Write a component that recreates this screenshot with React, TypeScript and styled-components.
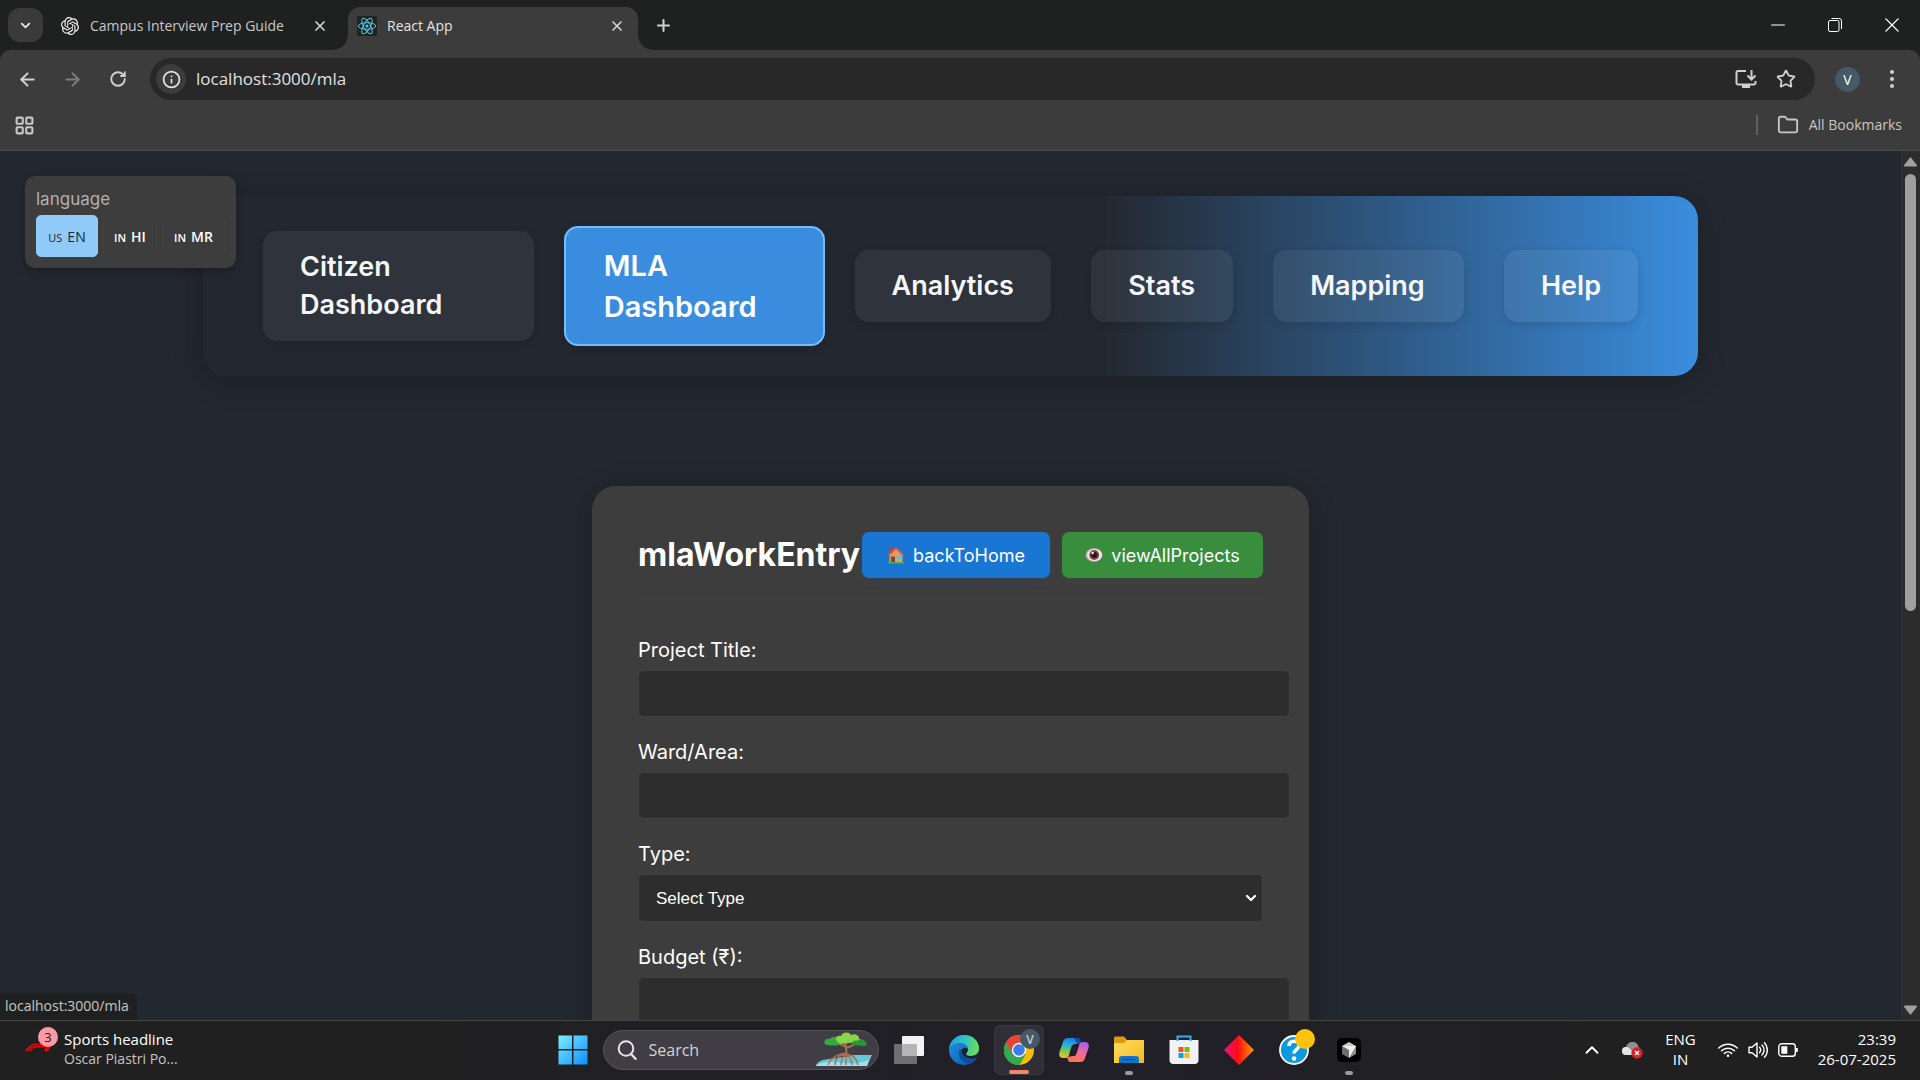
import React from "react";
import styled, { createGlobalStyle, css } from "styled-components";
import {
  ArrowLeft,
  ArrowRight,
  ChevronDown,
  ChevronUp,
  Folder,
  Info,
  LayoutGrid,
  Minus,
  Plus,
  RotateCw,
  Star,
  X,
} from "lucide-react";
import { SiOpenai } from "react-icons/si";

const systemFont = `"Open Sans", "Noto Sans", sans-serif`;
const appFont = `Inter, "Noto Sans", sans-serif`;

const color = {
  strip: "#1f2120",
  chrome: "#3c3c3c",
  omnibox: "#282828",
  page: "#23272f",
  panel: "#3d3d3d",
  field: "#2d2d2d",
  blue: "#3a8dde",
};

const GlobalStyle = createGlobalStyle`
  *, *::before, *::after { box-sizing: border-box; }
  body { margin: 0; background: ${color.page}; font-family: ${systemFont}; }
  button, input, select { font: inherit; color: inherit; margin: 0; }
  button { border: 0; padding: 0; background: none; }
  h1, p { margin: 0; }
  a { color: inherit; text-decoration: none; }
  svg { display: block; flex: none; }
`;

const Screen = styled.div`
  display: flex;
  flex-direction: column;
  height: 100vh;
  overflow: hidden;
`;

/* ---------- browser window ---------- */

const TabStrip = styled.div`
  display: flex;
  align-items: center;
  height: 50px;
  flex: none;
  padding-left: 8px;
  background: ${color.strip};
  color: #e3e3e3;
`;

const TabSearch = styled.button`
  display: grid;
  place-items: center;
  width: 35px;
  height: 34px;
  border-radius: 12px;
  background: #3a3a3a;
`;

const Tab = styled.div<{ $active?: boolean }>`
  position: relative;
  display: flex;
  align-items: center;
  gap: 10px;
  width: ${(p) => (p.$active ? 290 : 305)}px;
  height: 43px;
  margin-top: 7px;
  padding: 0 ${(p) => (p.$active ? 11 : 18)}px 6px ${(p) => (p.$active ? 9 : 17)}px;
  color: ${(p) => (p.$active ? "#e3e3e3" : "#c7c7c7")};
  ${(p) =>
    p.$active &&
    css`
      border-radius: 12px 12px 0 0;
      background: ${color.chrome};
      &::before,
      &::after {
        content: "";
        position: absolute;
        bottom: 0;
        width: 14px;
        height: 14px;
      }
      &::before {
        right: 100%;
        background: radial-gradient(circle at 0 0, transparent 13px, ${color.chrome} 14px);
      }
      &::after {
        left: 100%;
        background: radial-gradient(circle at 100% 0, transparent 13px, ${color.chrome} 14px);
      }
    `}
`;

const TabTitle = styled.span`
  flex: 1;
  font-size: 14px;
  line-height: 20px;
  white-space: nowrap;
`;

const Favicon = styled.span<{ $dark?: boolean }>`
  display: grid;
  place-items: center;
  width: 20px;
  height: 20px;
  border-radius: 2px;
  background: ${(p) => (p.$dark ? "#222222" : "transparent")};
`;

const IconButton = styled.button<{ $width?: number; $dim?: boolean }>`
  display: grid;
  place-items: center;
  width: ${(p) => p.$width ?? 20}px;
  height: 32px;
  color: ${(p) => (p.$dim ? "#7c7c7c" : "#d0d0d0")};
`;

const WindowButtons = styled.div`
  display: flex;
  margin-left: auto;
`;

const WindowButton = styled(IconButton)`
  width: 57px;
  color: #ffffff;
`;

const Toolbar = styled.div`
  display: flex;
  align-items: center;
  height: 50px;
  padding: 8px 8px 0 5px;
  border-radius: 10px 10px 0 0;
  background: ${color.chrome};
  color: #d0d0d0;
`;

const ToolbarFrame = styled.div`
  flex: none;
  background: ${color.strip};
`;

const Omnibox = styled.div`
  display: flex;
  align-items: center;
  flex: 1;
  height: 42px;
  margin: 0 20px 0 10px;
  padding: 0 9px 0 6px;
  border-radius: 21px;
  background: ${color.omnibox};
`;

const SiteInfo = styled.button`
  display: grid;
  place-items: center;
  width: 30px;
  height: 30px;
  border-radius: 50%;
  background: ${color.chrome};
  color: #e3e3e3;
`;

const Address = styled.input`
  flex: 1;
  min-width: 0;
  padding: 0 10px;
  border: 0;
  outline: 0;
  background: transparent;
  color: #e0e0e0;
  font-size: 17px;
  line-height: 24px;
`;

const Avatar = styled.button`
  display: grid;
  place-items: center;
  width: 25px;
  height: 25px;
  border-radius: 50%;
  background: #455a64;
  color: #ffffff;
  font-size: 14px;
  margin-right: 12px;
`;

const BookmarkBar = styled.div`
  display: flex;
  align-items: center;
  justify-content: space-between;
  flex: none;
  height: 51px;
  padding: 0 18px 0 14px;
  border-bottom: 1px solid #4a4a4a;
  background: ${color.chrome};
  color: #c7c7c7;
`;

const AllBookmarks = styled.button`
  display: flex;
  align-items: center;
  gap: 10px;
  height: 20px;
  padding-left: 19px;
  border-left: 2px solid #5e5e5e;
  font-size: 14px;
  line-height: 20px;
`;

/* ---------- page viewport ---------- */

const Viewport = styled.div`
  position: relative;
  display: flex;
  flex: 1;
  min-height: 0;
  background: ${color.page};
`;

const Page = styled.main`
  position: relative;
  flex: 1;
  overflow: hidden;
  font-family: ${appFont};
  color: #ffffff;
`;

const Scrollbar = styled.div`
  display: flex;
  flex-direction: column;
  align-items: center;
  justify-content: space-between;
  width: 19px;
  padding: 6px 0 5px;
  background: #2c2c2c;
`;

const ScrollTrack = styled.div`
  flex: 1;
  width: 11px;
  padding: 7px 0;
`;

const ScrollThumb = styled.div`
  height: 53%;
  border-radius: 6px;
  background: #9f9f9f;
`;

const StatusBubble = styled.div`
  position: absolute;
  left: 0;
  bottom: 0;
  padding: 2px 8px 3px 5px;
  border-top-right-radius: 6px;
  background: ${color.strip};
  color: #c7c7c7;
  font-size: 14px;
  line-height: 22px;
`;

const LanguagePanel = styled.section`
  position: absolute;
  z-index: 1;
  top: 25px;
  left: 25px;
  padding: 11px;
  border-radius: 10px;
  background: ${color.panel};
  box-shadow: 0 3px 10px rgba(0, 0, 0, 0.25);
`;

const LanguageLabel = styled.p`
  color: #b0b0b0;
  font-size: 17px;
  line-height: 24px;
  margin-bottom: 4px;
`;

const LanguageRow = styled.div`
  display: grid;
  grid-template-columns: 62px 54px 63px;
  gap: 5px;
`;

const LanguageButton = styled.button<{ $active?: boolean }>`
  display: flex;
  align-items: center;
  justify-content: center;
  gap: 5px;
  height: 42px;
  border: 1px solid ${(p) => (p.$active ? "#90caf9" : "#404040")};
  border-radius: 5px;
  background: ${(p) => (p.$active ? "#90caf9" : "transparent")};
  color: ${(p) => (p.$active ? "#23272f" : "#ffffff")};
  font-family: ${systemFont};
  font-size: 14px;
  font-weight: ${(p) => (p.$active ? 400 : 600)};
`;

const Region = styled.span`
  padding-top: 2px;
  font-size: 11px;
`;

const Nav = styled.nav`
  display: grid;
  grid-template-columns: 271fr 241fr 197fr 142fr 191fr 133fr;
  align-items: center;
  gap: 40px;
  max-width: 1495px;
  margin: 45px auto 0;
  padding: 30px 60px;
  border-radius: 24px;
  background: linear-gradient(90deg, ${color.page} 60%, ${color.blue} 100%);
  box-shadow: 0 5px 30px rgba(0, 0, 0, 0.22);
`;

const NavLink = styled.a<{ $active?: boolean }>`
  padding: 17px 37px;
  border-radius: 14px;
  background: rgba(255, 255, 255, 0.06);
  box-shadow: 0 3px 10px rgba(0, 0, 0, 0.12);
  color: #f5f7fa;
  font-size: 27px;
  font-weight: 600;
  line-height: 38px;
  ${(p) =>
    p.$active &&
    css`
      margin: 0 -10px;
      padding: 17px 38px;
      border: 2px solid #74bdfb;
      background: ${color.blue};
      color: #ffffff;
      font-size: 29px;
      line-height: 41px;
    `}
`;

const Card = styled.section`
  max-width: 717px;
  margin: 110px auto 0;
  padding: 46px;
  border-radius: 24px;
  background: ${color.panel};
  box-shadow: 0 5px 30px rgba(0, 0, 0, 0.2);
`;

const CardHeader = styled.header`
  display: flex;
  align-items: center;
  justify-content: space-between;
  padding-bottom: 19px;
  margin-bottom: 37px;
  border-bottom: 1px solid #404040;
`;

const CardTitle = styled.h1`
  font-size: 32px;
  font-weight: 700;
  line-height: 46px;
  white-space: nowrap;
`;

const CardActions = styled.div`
  display: grid;
  grid-template-columns: 188px 201px;
  gap: 12px;
`;

const ActionButton = styled.button<{ $tone: string }>`
  display: flex;
  align-items: center;
  justify-content: center;
  gap: 8px;
  height: 46px;
  border-radius: 7px;
  background: ${(p) => p.$tone};
  box-shadow: 0 3px 10px ${(p) => p.$tone}1c;
  font-size: 18px;
`;

const Form = styled.form`
  display: grid;
  gap: 20px;
`;

const Field = styled.div`
  display: grid;
  gap: 5px;
`;

const FieldLabel = styled.label`
  font-size: 20px;
  line-height: 30px;
`;

const fieldBox = css`
  border: 1px solid #414141;
  border-radius: 5px;
  background: ${color.field};
  color: #ffffff;
  font-family: "Liberation Sans", Arial, sans-serif;
  font-size: 17px;
`;

const TextInput = styled.input`
  ${fieldBox}
  width: calc(100% + 27px);
  height: 47px;
  padding: 0 14px;
`;

const SelectWrap = styled.div`
  display: grid;
  align-items: center;
  > * {
    grid-area: 1 / 1;
  }
  > svg {
    justify-self: end;
    margin-right: 4px;
    pointer-events: none;
  }
`;

const SelectInput = styled.select`
  ${fieldBox}
  appearance: none;
  width: 100%;
  height: 48px;
  padding: 0 17px;
`;

/* ---------- taskbar ---------- */

const Taskbar = styled.footer`
  display: grid;
  grid-template-columns: 1fr auto 1fr;
  align-items: center;
  flex: none;
  height: 60px;
  padding: 0 24px 2px 25px;
  border-top: 1px solid #444444;
  background: linear-gradient(90deg, #202020 20%, #211f28 55%, #202020 85%);
  color: #ffffff;
  font-size: 15px;
  line-height: 20px;
`;

const NewsWidget = styled.button`
  display: flex;
  align-items: center;
  gap: 4px;
  justify-self: start;
  text-align: left;
`;

const NewsText = styled.span`
  padding-bottom: 2px;
`;

const Muted = styled.span`
  display: block;
  color: #c4c4c4;
  font-size: 14px;
`;

const Pinned = styled.div`
  display: flex;
  align-items: center;
  gap: 5px;
`;

const AppSlot = styled.button<{ $focused?: boolean; $running?: boolean }>`
  position: relative;
  display: grid;
  place-items: center;
  width: 50px;
  height: 50px;
  border-radius: 6px;
  ${(p) =>
    p.$focused &&
    css`
      border: 1px solid #3a3842;
      background: #302e37;
    `}
  ${(p) =>
    (p.$focused || p.$running) &&
    css`
      &::after {
        content: "";
        position: absolute;
        bottom: 0;
        width: ${p.$focused ? 20 : 8}px;
        height: 4px;
        border-radius: 2px;
        background: ${p.$focused ? "#f58468" : "#9a9a9a"};
      }
    `}
`;

/* Badged icons keep the app mark centred and let the badge hang past its corner. */
const BadgeShift = styled.span`
  display: block;
  padding: 0 0 6px 6px;
`;

const SearchPill = styled.label`
  display: flex;
  align-items: center;
  width: 276px;
  height: 40px;
  padding: 0 5px 0 13px;
  border: 1px solid #57555c;
  border-radius: 20px;
  background: #403e44;
`;

const SearchInput = styled.input`
  flex: 1;
  min-width: 0;
  padding: 0 12px;
  border: 0;
  outline: 0;
  background: transparent;
  font-size: 16px;
  &::placeholder {
    color: #d2d2d4;
    opacity: 1;
  }
`;

const Tray = styled.div`
  display: flex;
  align-items: center;
  justify-self: end;
`;

const TrayGroup = styled.div<{ $gap: number; $right: number }>`
  display: flex;
  align-items: center;
  gap: ${(p) => p.$gap}px;
  margin-right: ${(p) => p.$right}px;
`;

const TrayText = styled.div<{ $align: string; $right?: number }>`
  margin-right: ${(p) => p.$right ?? 0}px;
  padding-bottom: 2px;
  text-align: ${(p) => p.$align};
`;

/* ---------- drawings ---------- */

const ReactMark = () => (
  <svg width="20" height="20" viewBox="-12 -12 24 24" fill="none" stroke="#58c4dc" strokeWidth="1.2">
    <circle r="1.8" fill="#58c4dc" stroke="none" />
    <ellipse rx="10.5" ry="4" />
    <ellipse rx="10.5" ry="4" transform="rotate(60)" />
    <ellipse rx="10.5" ry="4" transform="rotate(120)" />
  </svg>
);

const InstallIcon = () => (
  <svg width="22" height="20" viewBox="0 0 22 20" fill="none" stroke="currentColor" strokeWidth="2">
    <path d="M11 2H3a1.5 1.5 0 0 0-1.5 1.5V14A1.5 1.5 0 0 0 3 15.5h16a1.5 1.5 0 0 0 1.5-1.5v-2" />
    <path d="M16.5 1v9M12.5 6.5l4 4 4-4" />
    <path d="M7 17.5h8" strokeWidth="3" />
  </svg>
);

const KebabIcon = () => (
  <svg width="6" height="20" viewBox="0 0 6 20" fill="currentColor">
    <circle cx="3" cy="3" r="2" />
    <circle cx="3" cy="10" r="2" />
    <circle cx="3" cy="17" r="2" />
  </svg>
);

const RestoreIcon = () => (
  <svg width="14" height="14" viewBox="0 0 14 14" fill="none" stroke="currentColor">
    <rect x=".5" y="2.5" width="10.5" height="11" rx="1.5" />
    <path d="M3.500.5h7.500a2.500 2.500 0 0 1 2.500 2.500v8" />
  </svg>
);

const CloseIcon = () => (
  <svg width="14" height="14" viewBox="0 0 14 14" fill="none" stroke="currentColor" strokeWidth="1.2">
    <path d="m.5.5 13 13m0-13-13 13" />
  </svg>
);

const ScrollArrow = ({ down }: { down?: boolean }) => (
  <svg width="13" height="10" viewBox="0 0 13 10" fill="#9f9f9f">
    <path
      d={
        down
          ? "M1 .5h11a1 1 0 0 1 .8 1.600l-5.500 7a1 1 0 0 1-1.600 0l-5.500-7A1 1 0 0 1 1 .5z"
          : "M1 9.500h11a1 1 0 0 0 .8-1.600l-5.500-7a1 1 0 0 0-1.600 0l-5.500 7A1 1 0 0 0 1 9.500z"
      }
    />
  </svg>
);

const HouseIcon = () => (
  <svg width="18" height="18" viewBox="0 0 18 18">
    <path d="M3 1.500h3v5H3z" fill="#a5523c" />
    <path d="M2.500 8 9 2l6.500 6v9h-13z" fill="#d9a066" />
    <path d="M9 .8 17.500 9l-1.200 1.300L9 3.500l-7.300 6.800L.5 9z" fill="#e0553d" />
    <path d="M4 10.500h4V17H4z" fill="#7a4a32" />
    <path d="M10 9.500h4v4h-4z" fill="#5cc3f0" />
    <path d="M1 16h16v1.500H1z" fill="#4caf50" />
  </svg>
);

const EyeIcon = () => (
  <svg width="18" height="16" viewBox="0 0 18 16">
    <ellipse cx="9" cy="8" rx="8.5" ry="7" fill="#b8a2ab" />
    <ellipse cx="9.5" cy="8" rx="7.5" ry="6" fill="#f1edf0" />
    <circle cx="9.2" cy="8" r="5" fill="#7b4a45" />
    <circle cx="9.2" cy="8" r="3" fill="#2a1416" />
    <circle cx="7.7" cy="6" r="1.2" fill="#ffffff" />
  </svg>
);

const SportsIcon = () => (
  <svg width="35" height="50" viewBox="0 0 35 50">
    <path d="M0 26c4-6 7-7.500 12-7.500h15L23.500 26h-5l2-3.500H12c-3 0-4.500 1-6.500 3.500z" fill="#e10600" />
    <path d="M3 26c4-5 6-5.700 10-5.700h12" fill="none" stroke="#202020" strokeWidth=".8" />
    <circle cx="23" cy="12" r="10" fill="#ff99a4" />
    <text x="23" y="17" textAnchor="middle" fontSize="13" fontFamily="Open Sans" fill="#1a1a1a">
      3
    </text>
  </svg>
);

const StartIcon = () => (
  <svg width="30" height="30" viewBox="0 0 30 30">
    <defs>
      <linearGradient id="start" gradientUnits="userSpaceOnUse" x1="0" y1="0" x2="30" y2="30">
        <stop offset="0" stopColor="#7df0ff" />
        <stop offset="1" stopColor="#0a8bff" />
      </linearGradient>
    </defs>
    <path d="M.5.5H14V14H.5zM15.500.5h14V14h-14zM.5 15.500H14v14H.5zM15.500 15.500h14v14h-14z" fill="url(#start)" />
  </svg>
);

const SearchIcon = () => (
  <svg width="20" height="20" viewBox="0 0 20 20" fill="none" stroke="#e6e6e8" strokeWidth="2">
    <circle cx="9" cy="8.5" r="7.3" />
    <path d="m14 14 4.500 4.800" strokeLinecap="round" strokeWidth="2.4" />
  </svg>
);

const MangroveArt = () => (
  <svg width="58" height="36" viewBox="0 0 58 36">
    <path d="M8 28c12-2 28-3.500 31-5h18l-5 11H1c1-3 3-5 7-6z" fill="#6cc6d9" />
    <path d="M1 33c10-4 20-3 30-2s14 0 23-3l-2 6H1z" fill="#9fe0ea" />
    <g fill="none" stroke="#a9714b" strokeWidth="1.4">
      <path d="M31 9c-2 6 2 9 0 15M31 15c-3-2-7-3-11-5M31 16c4-1 8-3 11-5" strokeWidth="2" />
      <path d="M31 21c-9 1-15 4-18 12M31 22c-7 1-11 5-11 11M31 22c-4 3-5 6-5 11M31 22v11M31 22c4 3 6 6 6 11M31 22c7 1 11 4 12 11" />
    </g>
    <path d="M10 12c-2-3 1-6 5-5 2-3 6-3 8 0 3 0 5 3 3 5-2 2-14 2-16 0z" fill="#35a83f" />
    <path d="M21 8c-1-4 3-5 5-4 1-4 8-5 10-1 4-2 9 1 8 4 3 0 4 3 2 4-4 2-8-1-12 0-5 1-11 2-13-3z" fill="#8bd34b" />
    <path d="M37 13c-1-3 2-5 5-4 3-3 9-1 9 2 2 2 0 3-2 3z" fill="#27963b" />
  </svg>
);

const TaskViewIcon = () => (
  <svg width="30" height="30" viewBox="0 0 30 30">
    <rect x="8" y="1" width="22" height="20" rx="1" fill="#f2f2f2" />
    <rect x="0" y="9" width="23" height="20" rx="1" fill="#8a8a8a" opacity=".75" />
    <rect x="8" y="9" width="15" height="12" fill="#b5b5b5" />
  </svg>
);

const EdgeIcon = () => (
  <svg width="30" height="30" viewBox="0 0 30 30">
    <defs>
      <linearGradient id="edgeTop" x1="0" y1=".3" x2="1" y2=".5">
        <stop offset="0" stopColor="#1f9de0" />
        <stop offset=".5" stopColor="#2fc3c5" />
        <stop offset="1" stopColor="#6ce04f" />
      </linearGradient>
      <linearGradient id="edgeSide" x1="0" y1="0" x2="1" y2="1">
        <stop offset="0" stopColor="#2196e3" />
        <stop offset="1" stopColor="#0b54a8" />
      </linearGradient>
    </defs>
    <circle cx="15" cy="15" r="15" fill="url(#edgeSide)" />
    <path d="M0 14C1 5 8 0 15 0c9 0 15 6 15 13 0 5-4 8-8 8-3 0-5-1-5-2s2-2 2-5c0-4-4-6-8-6C6 8 2 10 0 14z" fill="url(#edgeTop)" />
    <path d="M11 14c-3 5 0 13 9 15 4-1 7-4 8.500-7-5 3-14 1-15.500-5z" fill="#0d4f9e" />
    <path d="M12.500 15a4 4 0 0 1 6.500-1c0 3-2 4-2 5 0 1.500 3 2.300 5 2 3 0 6-1.500 8-4l-1 5c-7 4-16.500 0-16.500-7z" fill="#211f28" />
  </svg>
);

const ChromeIcon = () => (
  <svg width="36" height="36" viewBox="0 0 36 36">
    <circle cx="15" cy="21" r="15" fill="#fbbc05" />
    <path d="M15 21 2 13.500A15 15 0 0 0 15.500 36l6.500-11z" fill="#34a853" />
    <path d="M2 13.500A15 15 0 0 1 28 13.500H15v7.500l-6.500 3.800z" fill="#ea4335" />
    <circle cx="15" cy="21" r="7.2" fill="#ffffff" />
    <circle cx="15" cy="21" r="5.8" fill="#3b7ded" />
    <circle cx="26" cy="10" r="10" fill="#455a64" />
    <text x="26" y="14.5" textAnchor="middle" fontSize="12" fontFamily="Open Sans" fontWeight="600" fill="#c6ced2">
      V
    </text>
  </svg>
);

const CopilotIcon = () => (
  <svg width="30" height="28" viewBox="0 0 30 28">
    <defs>
      <linearGradient id="copilotLeft" x1=".4" y1="0" x2=".2" y2="1">
        <stop offset="0" stopColor="#1c7fe8" />
        <stop offset=".35" stopColor="#22b4d8" />
        <stop offset=".65" stopColor="#7fc851" />
        <stop offset="1" stopColor="#f3c120" />
      </linearGradient>
      <linearGradient id="copilotRight" x1=".8" y1="0" x2=".4" y2="1">
        <stop offset="0" stopColor="#a45cf0" />
        <stop offset=".5" stopColor="#ec6aa0" />
        <stop offset="1" stopColor="#f9774a" />
      </linearGradient>
    </defs>
    <path d="M9 2h9c3 0 3 2 4 5l-6 1c-2 0-3 1-4 4l-2 7c-.5 2-2 3-4 3H4c-3 0-4.500-2-3.500-6L4 6c1-3 2-4 5-4z" fill="url(#copilotLeft)" />
    <path d="M21 26h-9c-3 0-3-2-4-5l6-1c2 0 3-1 4-4l2-7c.5-2 2-3 4-3h2c3 0 4.500 2 3.500 6L26 22c-1 3-2 4-5 4z" fill="url(#copilotRight)" />
    <path d="M16 8h4l-4 12h-4z" fill="#211f28" />
    <path d="M14 2h4c3 0 3 2 4 5h-3c-2 0-3-5-5-5z" fill="#174aa5" />
  </svg>
);

const ExplorerIcon = () => (
  <svg width="30" height="28" viewBox="0 0 30 28">
    <defs>
      <linearGradient id="folder" x1="0" y1="0" x2="1" y2="1">
        <stop offset="0" stopColor="#ffdc62" />
        <stop offset="1" stopColor="#f8b81e" />
      </linearGradient>
    </defs>
    <path d="M0 2a1.500 1.500 0 0 1 1.500-1.500H10l3 3.500h16v8H0z" fill="#dc9a0c" />
    <path d="M0 7h10l3-3h17v23H0z" fill="url(#folder)" />
    <path d="M5 27v-4a3 3 0 0 1 3-3h14a3 3 0 0 1 3 3v4z" fill="#0f75cf" />
    <path d="M9 23.500h12" stroke="#08498c" strokeWidth="1.2" />
  </svg>
);

const StoreIcon = () => (
  <svg width="30" height="30" viewBox="0 0 30 30">
    <path d="M.5 5h29v20a4 4 0 0 1-4 4h-21a4 4 0 0 1-4-4z" fill="#f1f1f1" />
    <path d="M8.500 6V1.500h13V6" fill="none" stroke="#2fb4ee" strokeWidth="2" />
    <path d="M9.500 12h5v5h-5z" fill="#f25022" />
    <path d="M15.500 12h5v5h-5z" fill="#7fba00" />
    <path d="M9.500 18h5v5h-5z" fill="#00a4ef" />
    <path d="M15.500 18h5v5h-5z" fill="#ffb900" />
  </svg>
);

const DiamondIcon = () => (
  <svg width="30" height="30" viewBox="0 0 30 30">
    <defs>
      <linearGradient id="diamond">
        <stop offset="0" stopColor="#e4178a" />
        <stop offset=".45" stopColor="#ff0a14" />
        <stop offset="1" stopColor="#ff9b00" />
      </linearGradient>
    </defs>
    <path d="M15 0 30 15 15 30 0 15z" fill="url(#diamond)" />
  </svg>
);

const HelpIcon = () => (
  <svg width="36" height="36" viewBox="0 0 36 36">
    <circle cx="15" cy="21" r="14" fill="#0a9bdc" stroke="#ffffff" strokeWidth="1.8" />
    <path d="M10 17c0-3 2-4.700 5-4.700s5 1.700 5 4.200c0 4-5 3.700-5 8" fill="none" stroke="#ffffff" strokeWidth="3.6" />
    <circle cx="15" cy="29.5" r="2.3" fill="#ffffff" />
    <circle cx="26" cy="10" r="10" fill="#ffc20e" />
  </svg>
);

const CursorIcon = () => (
  <svg width="24" height="24" viewBox="0 0 24 24">
    <rect width="24" height="24" rx="5" fill="#000000" />
    <path d="m12 4 7 4-7 4-7-4z" fill="#c9c9c9" />
    <path d="M5 8l7 4v8l-7-4z" fill="#6e6e6e" />
    <path d="M19 8v8l-7 4v-8z" fill="#8f8f8f" />
    <path d="M5 8h14l-7 12v-8z" fill="#ededed" />
  </svg>
);

const CloudIcon = () => (
  <svg width="21" height="18" viewBox="0 0 21 18">
    <path d="M4 14a4 4 0 0 1 0-8c1-3 3-5 7-5 3 0 5 2 5.500 5C19 6.500 20 14 15 14z" fill="#8f8f8f" />
    <path d="M4 14a4 4 0 0 1 0-8c3 0 5 2 8 8z" fill="#e4e4e4" />
    <circle cx="15" cy="12" r="5.7" fill="#d8202c" />
    <path d="m13 10 4 4m0-4-4 4" stroke="#ffffff" strokeWidth="1.4" />
  </svg>
);

const WifiIcon = () => (
  <svg width="20" height="16" viewBox="0 0 20 16" fill="none" stroke="#ffffff" strokeWidth="1.5">
    <path d="M.8 6a13 13 0 0 1 18.400 0M3.600 8.800a9 9 0 0 1 12.800 0M6.400 11.400a5.200 5.200 0 0 1 7.200 0" strokeLinecap="round" />
    <circle cx="10" cy="13.8" r="1.3" fill="#ffffff" stroke="none" />
  </svg>
);

const SpeakerIcon = () => (
  <svg width="20" height="18" viewBox="0 0 20 18" fill="none" stroke="#ffffff" strokeWidth="1.4">
    <path d="M1 6.300h3L9 2v14l-5-4.300H1z" strokeLinejoin="round" />
    <path d="M11.500 6.300a4 4 0 0 1 0 5.400M14 4a7 7 0 0 1 0 10M16.500 1.800a10.500 10.500 0 0 1 0 14.400" strokeLinecap="round" />
  </svg>
);

const BatteryIcon = () => (
  <svg width="20" height="14" viewBox="0 0 20 14" fill="none" stroke="#ffffff" strokeWidth="1.4">
    <rect x=".8" y=".8" width="16.5" height="12.4" rx="2.8" />
    <path d="M3.300 3.200h6v7.600h-6z" fill="#ffffff" stroke="none" />
    <path d="M18.800 5v4" strokeWidth="2" />
  </svg>
);

/* ---------- data ---------- */

const navItems = ["Citizen Dashboard", "MLA Dashboard", "Analytics", "Stats", "Mapping", "Help"];

const languages = [
  { region: "US", code: "EN" },
  { region: "IN", code: "HI" },
  { region: "IN", code: "MR" },
];

const apps = [
  { name: "Task view", icon: <TaskViewIcon /> },
  { name: "Edge", icon: <EdgeIcon /> },
  { name: "Chrome", icon: <ChromeIcon />, focused: true, badged: true },
  { name: "Copilot", icon: <CopilotIcon /> },
  { name: "File Explorer", icon: <ExplorerIcon />, running: true },
  { name: "Store", icon: <StoreIcon /> },
  { name: "Studio", icon: <DiamondIcon /> },
  { name: "Get Help", icon: <HelpIcon />, badged: true },
  { name: "Cursor", icon: <CursorIcon />, running: true },
];

function TextField({ id, label }: { id: string; label: string }) {
  return (
    <Field>
      <FieldLabel htmlFor={id}>{label}</FieldLabel>
      <TextInput id={id} type="text" />
    </Field>
  );
}

function Browser() {
  return (
    <>
      <TabStrip>
        <TabSearch aria-label="Search tabs">
          <ChevronDown size={15} strokeWidth={3} />
        </TabSearch>
        <Tab>
          <Favicon>
            <SiOpenai size={18} color="#f0f0f0" />
          </Favicon>
          <TabTitle>Campus Interview Prep Guide</TabTitle>
          <IconButton aria-label="Close tab">
            <X size={16} strokeWidth={2.6} />
          </IconButton>
        </Tab>
        <Tab $active>
          <Favicon $dark>
            <ReactMark />
          </Favicon>
          <TabTitle>React App</TabTitle>
          <IconButton aria-label="Close tab">
            <X size={16} strokeWidth={2.6} />
          </IconButton>
        </Tab>
        <IconButton $width={50} aria-label="New tab">
          <Plus size={19} strokeWidth={2.6} />
        </IconButton>
        <WindowButtons>
          <WindowButton aria-label="Minimize">
            <Minus size={22} strokeWidth={1.3} />
          </WindowButton>
          <WindowButton aria-label="Restore">
            <RestoreIcon />
          </WindowButton>
          <WindowButton aria-label="Close">
            <CloseIcon />
          </WindowButton>
        </WindowButtons>
      </TabStrip>
      <ToolbarFrame>
        <Toolbar>
          <IconButton $width={45} aria-label="Back">
            <ArrowLeft size={21} strokeWidth={2.3} />
          </IconButton>
          <IconButton $width={45} $dim aria-label="Forward">
            <ArrowRight size={21} strokeWidth={2.3} />
          </IconButton>
          <IconButton $width={45} aria-label="Reload">
            <RotateCw size={18} strokeWidth={2.5} />
          </IconButton>
          <Omnibox>
            <SiteInfo aria-label="Site information">
              <Info size={19} strokeWidth={2.2} />
            </SiteInfo>
            <Address aria-label="Address" defaultValue="localhost:3000/mla" />
            <IconButton $width={40} aria-label="Install app">
              <InstallIcon />
            </IconButton>
            <IconButton $width={40} aria-label="Bookmark">
              <Star size={20} strokeWidth={2.2} />
            </IconButton>
          </Omnibox>
          <Avatar aria-label="Profile">V</Avatar>
          <IconButton $width={40} aria-label="Menu">
            <KebabIcon />
          </IconButton>
        </Toolbar>
      </ToolbarFrame>
      <BookmarkBar>
        <LayoutGrid size={21} strokeWidth={2.4} />
        <AllBookmarks>
          <Folder size={22} strokeWidth={2} />
          All Bookmarks
        </AllBookmarks>
      </BookmarkBar>
    </>
  );
}

function Dashboard() {
  return (
    <Viewport>
      <Page>
        <LanguagePanel>
          <LanguageLabel>language</LanguageLabel>
          <LanguageRow>
            {languages.map((l) => (
              <LanguageButton key={l.code} $active={l.code === "EN"}>
                <Region>{l.region}</Region>
                {l.code}
              </LanguageButton>
            ))}
          </LanguageRow>
        </LanguagePanel>
        <Nav>
          {navItems.map((item) => (
            <NavLink key={item} href="#" $active={item === "MLA Dashboard"}>
              {item}
            </NavLink>
          ))}
        </Nav>
        <Card>
          <CardHeader>
            <CardTitle>mlaWorkEntry</CardTitle>
            <CardActions>
              <ActionButton $tone="#1976d2">
                <HouseIcon />
                backToHome
              </ActionButton>
              <ActionButton $tone="#388e3c">
                <EyeIcon />
                viewAllProjects
              </ActionButton>
            </CardActions>
          </CardHeader>
          <Form>
            <TextField id="title" label="Project Title:" />
            <TextField id="ward" label="Ward/Area:" />
            <Field>
              <FieldLabel htmlFor="type">Type:</FieldLabel>
              <SelectWrap>
                <SelectInput id="type">
                  <option>Select Type</option>
                </SelectInput>
                <ChevronDown size={16} strokeWidth={3.4} />
              </SelectWrap>
            </Field>
            <TextField id="budget" label="Budget (₹):" />
          </Form>
        </Card>
      </Page>
      <Scrollbar>
        <ScrollArrow />
        <ScrollTrack>
          <ScrollThumb />
        </ScrollTrack>
        <ScrollArrow down />
      </Scrollbar>
      <StatusBubble>localhost:3000/mla</StatusBubble>
    </Viewport>
  );
}

function SystemTaskbar() {
  return (
    <Taskbar>
      <NewsWidget>
        <SportsIcon />
        <NewsText>
          Sports headline
          <Muted>Oscar Piastri Po...</Muted>
        </NewsText>
      </NewsWidget>
      <Pinned>
        <AppSlot aria-label="Start">
          <StartIcon />
        </AppSlot>
        <SearchPill>
          <SearchIcon />
          <SearchInput type="text" placeholder="Search" aria-label="Search" />
          <MangroveArt />
        </SearchPill>
        {apps.map((app) => (
          <AppSlot key={app.name} aria-label={app.name} $focused={app.focused} $running={app.running}>
            {app.badged ? <BadgeShift>{app.icon}</BadgeShift> : app.icon}
          </AppSlot>
        ))}
      </Pinned>
      <Tray>
        <TrayGroup $gap={19} $right={22}>
          <ChevronUp size={22} strokeWidth={2} />
          <CloudIcon />
        </TrayGroup>
        <TrayText $align="center" $right={22}>
          ENG
          <br />
          IN
        </TrayText>
        <TrayGroup $gap={10} $right={20}>
          <WifiIcon />
          <SpeakerIcon />
          <BatteryIcon />
        </TrayGroup>
        <TrayText $align="right">
          23:39
          <br />
          26-07-2025
        </TrayText>
      </Tray>
    </Taskbar>
  );
}

export default function App() {
  return (
    <Screen>
      <GlobalStyle />
      <Browser />
      <Dashboard />
      <SystemTaskbar />
    </Screen>
  );
}
